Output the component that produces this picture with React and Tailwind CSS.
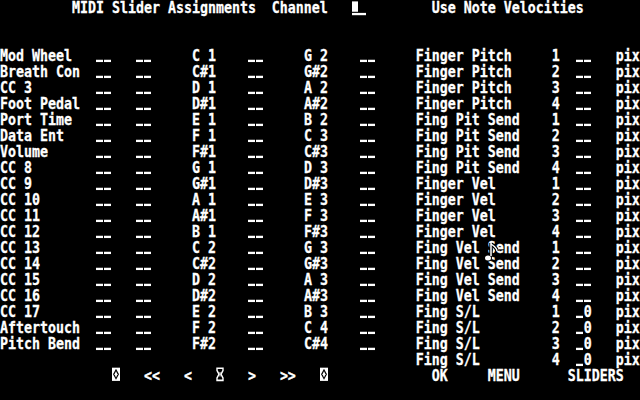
import React from "react";

const leftLabels = [
  "Mod Wheel", "Breath Con", "CC 3", "Foot Pedal", "Port Time", "Data Ent",
  "Volume", "CC 8", "CC 9", "CC 10", "CC 11", "CC 12", "CC 13", "CC 14",
  "CC 15", "CC 16", "CC 17", "Aftertouch", "Pitch Bend",
];

const notes = ["C ", "C#", "D ", "D#", "E ", "F ", "F#", "G ", "G#", "A ", "A#", "B "];
const noteName = (n) => notes[n % 12] + (Math.floor(n / 12) + 1);

const rightGroups = ["Finger Pitch", "Fing Pit Send", "Finger Vel", "Fing Vel Send", "Fing S/L"];

// build one 80 column text line
const buildRow = (i) => {
  const line = Array(80).fill(" ");
  const put = (col, s) => {
    for (let k = 0; k < s.length; k++) line[col + k] = s[k];
  };
  if (i < leftLabels.length) {
    put(0, leftLabels[i]);
    put(12, "__");
    put(17, "__");
    put(24, noteName(i));
    put(31, "__");
    put(38, noteName(i + 19));
    put(45, "__");
  }
  const group = Math.floor(i / 4);
  put(52, rightGroups[group]);
  put(69, String((i % 4) + 1));
  put(72, group === 4 ? "_0" : "__");
  put(77, "pix");
  return line.join("");
};

// the ST underscore sits on the baseline, so draw it as a small bar
const Under = () => (
  <span className="inline-block align-top w-2 h-4 pt-[10.5px]">
    <span className="block w-[7px] h-[2px] bg-white" />
  </span>
);

const renderLine = (s) =>
  s.split(/(_)/).map((part, k) => (part === "_" ? <Under key={k} /> : part));

const BoxIcon = () => (
  <span className="inline-block align-top w-2 h-4">
    <svg width="8" height="16" viewBox="0 0 8 16">
      <rect x="0" y="0.5" width="8" height="11.5" fill="#fff" />
      <path d="M4 1.5 L7 6.2 L4 11 L1 6.2 Z" fill="#000" />
      <path d="M4 3.5 L5.5 6.2 L4 9 L2.5 6.2 Z" fill="#fff" />
    </svg>
  </span>
);

const GlassIcon = () => (
  <span className="inline-block align-top w-2 h-4">
    <svg width="8" height="16" viewBox="0 0 8 16">
      <path d="M1 1 H7 V3 L5 6.2 L7 9.5 V11.5 H1 V9.5 L3 6.2 L1 3 Z" fill="none" stroke="#fff" strokeWidth="1.4" />
      <path d="M3.5 4.2 H4.5 V8.2 H3.5 Z" fill="#fff" />
    </svg>
  </span>
);

const TextCursor = () => (
  <span className="inline-block align-top w-4 h-4 pt-[1.6px]">
    <span className="block w-[6px] h-[9.6px] bg-white" />
    <span className="block mt-[0.9px] w-[14px] h-[1.75px] bg-white" />
  </span>
);

const rowCls = "whitespace-pre h-4 scale-y-[1.15] origin-[50%_6px]";

export default function App() {
  const rows = Array.from({ length: 20 }, (_, i) => buildRow(i));

  return (
    <div className="w-[640px] h-[400px] bg-black text-white overflow-hidden relative font-['DejaVu_Sans_Mono',monospace] font-bold text-[13.29px] leading-4 [-webkit-text-stroke:0.25px_white]">
      <div className={rowCls}>
        {"         MIDI Slider Assignments  Channel   "}
        <TextCursor />
        {"        Use Note Velocities"}
      </div>
      <div className="h-4" />
      <div className="h-4" />
      {rows.map((r, i) => (
        <div key={i} className={rowCls}>
          {renderLine(r)}
        </div>
      ))}
      <div className={rowCls}>
        {"              "}
        <BoxIcon />
        {"   <<   <   "}
        <GlassIcon />
        {"   >   >>   "}
        <BoxIcon />
        {"             OK     MENU      SLIDERS"}
      </div>

      {/* mouse pointer (note shape) */}
      <svg className="absolute left-[483px] top-[242px]" width="18" height="22" viewBox="0 0 18 22">
        <path d="M8 1 V14" stroke="#000" strokeWidth="3.5" />
        <path d="M8 2 C11 4 14 6 14 9" stroke="#000" strokeWidth="3.5" fill="none" />
        <ellipse cx="5" cy="16" rx="4" ry="3.5" fill="#000" />
        <path d="M8 1 V14" stroke="#fff" strokeWidth="1.5" />
        <path d="M8 2 C11 4 14 6 14 9" stroke="#fff" strokeWidth="1.5" fill="none" />
        <ellipse cx="5" cy="16" rx="3" ry="2.5" fill="#fff" />
      </svg>
    </div>
  );
}
